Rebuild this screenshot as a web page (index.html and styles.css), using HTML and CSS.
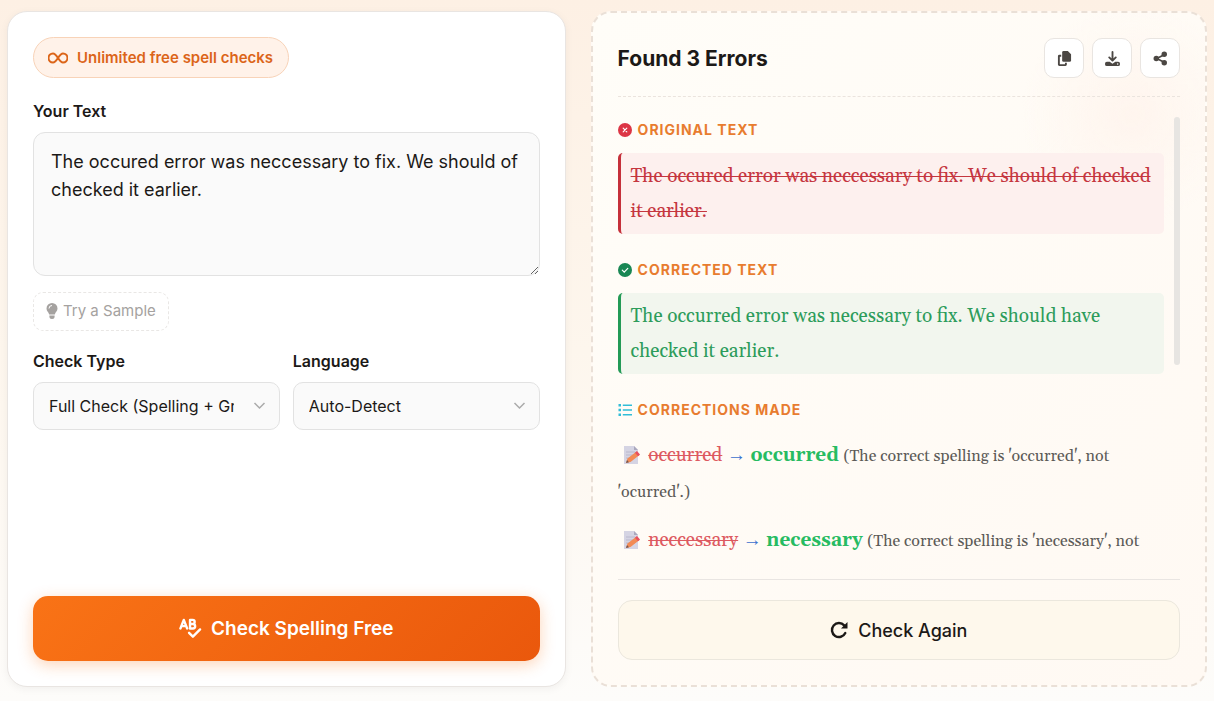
FILE: index.html
```html
<!DOCTYPE html>
<html lang="en">
<head>
  <meta charset="UTF-8">
  <meta name="viewport" content="width=device-width, initial-scale=1.0">
  <title>Free Spell Checker</title>
  <link rel="stylesheet" href="styles.css">
</head>
<body>
  <main class="checker">
    <!-- Input panel -->
    <form class="card input-card">
      <div class="badge">
        <svg class="icon-infinity" viewBox="0 0 20 12" aria-hidden="true"><path d="M10 6C8.300 3.400 7 1.500 5 1.500a4.500 4.500 0 0 0 0 9C7 10.500 8.300 8.600 10 6S13 1.500 15 1.500a4.500 4.500 0 0 1 0 9C13 10.500 11.700 8.600 10 6z"/></svg>
        <span>Unlimited free spell checks</span>
      </div>
      <label class="label" for="userText">Your Text</label>
      <textarea class="text-input" id="userText">The occured error was neccessary to fix. We should of checked it earlier.</textarea>
      <button type="button" class="sample-btn">
        <svg class="icon-bulb" viewBox="0 0 12 16" aria-hidden="true"><path d="M6 0a5.500 5.500 0 0 0-5.500 5.500c0 2.500 2 3.500 2.700 6h5.600c.7-2.500 2.700-3.500 2.700-6A5.500 5.500 0 0 0 6 0zM3.400 12.500h5.200v1A2.500 2.500 0 0 1 6.100 16h-.2a2.500 2.500 0 0 1-2.500-2.500z"/><path class="shine" d="M3 5.500a3 3 0 0 1 3-3"/></svg>
        <span>Try a Sample</span>
      </button>
      <div class="options">
        <div class="option">
          <label class="label" for="checkType">Check Type</label>
          <div class="select-wrap">
            <select id="checkType">
              <option>Full Check (Spelling + Grammar)</option>
              <option>Spelling Only</option>
            </select>
            <svg class="chevron" viewBox="0 0 12 8" aria-hidden="true"><path d="M1 1l5 5 5-5"/></svg>
          </div>
        </div>
        <div class="option">
          <label class="label" for="language">Language</label>
          <div class="select-wrap">
            <select id="language">
              <option>Auto-Detect</option>
              <option>English</option>
            </select>
            <svg class="chevron" viewBox="0 0 12 8" aria-hidden="true"><path d="M1 1l5 5 5-5"/></svg>
          </div>
        </div>
      </div>
      <button type="button" class="check-btn">
        <svg class="icon-spell" viewBox="0 0 24 21" aria-hidden="true"><path d="M1.500 10.500L5 1.500l3.500 9M2.700 8h4.600M11.500 1.500v9h3a2.300 2.300 0 0 0 0-4.700h-3 2.700a2.100 2.100 0 0 0 0-4.300z"/><path d="M10.500 15l4 4 7.500-7.500"/></svg>
        <span>Check Spelling Free</span>
      </button>
    </form>

    <!-- Results panel -->
    <section class="card result-card">
      <header class="result-header">
        <h2>Found 3 Errors</h2>
        <div class="actions">
          <button type="button" class="icon-btn" aria-label="Copy">
            <svg viewBox="0 0 16 16" aria-hidden="true"><path d="M7 0h4.500L15 3.500V10a1.500 1.500 0 0 1-1.500 1.500H7A1.500 1.500 0 0 1 5.500 10V1.500A1.500 1.500 0 0 1 7 0z"/><path d="M2.500 4H4.500v2H3v8h5.500v-1.500h2v2A1.500 1.500 0 0 1 9 16H2.500A1.500 1.500 0 0 1 1 14.500v-9A1.500 1.500 0 0 1 2.500 4z"/></svg>
          </button>
          <button type="button" class="icon-btn" aria-label="Download">
            <svg viewBox="0 0 16 16" aria-hidden="true"><path d="M8 1v9M4.500 6.800L8 10.200l3.500-3.400" fill="none" stroke="currentColor" stroke-width="2" stroke-linecap="round" stroke-linejoin="round"/><path fill-rule="evenodd" d="M2 11.500h3L8 13.500l3-2H14a2 2 0 0 1 2 2v.5a2 2 0 0 1-2 2H2a2 2 0 0 1-2-2v-.5a2 2 0 0 1 2-2zm11.500 1.500a.8.8 0 1 0 0 1.600.8.8 0 0 0 0-1.600z"/></svg>
          </button>
          <button type="button" class="icon-btn" aria-label="Share">
            <svg viewBox="0 0 16 16" aria-hidden="true"><path d="M12 4L4 8l8 4" fill="none" stroke="currentColor" stroke-width="1.800"/><circle cx="12" cy="3.500" r="2.900"/><circle cx="3.500" cy="8" r="2.900"/><circle cx="12" cy="12.500" r="2.900"/></svg>
          </button>
        </div>
      </header>

      <div class="result-scroll">
        <div class="result-body">
          <h3>
            <svg viewBox="0 0 14 14" aria-hidden="true"><circle cx="7" cy="7" r="7" fill="#dc3545"/><path d="M5.200 5.200l3.600 3.600M8.800 5.200L5.200 8.800" fill="none" stroke="#fff" stroke-width="1.200" stroke-linecap="round"/></svg>
            Original Text
          </h3>
          <p class="quote original">The occured error was neccessary to fix. We should of checked it earlier.</p>
          <h3>
            <svg viewBox="0 0 14 14" aria-hidden="true"><circle cx="7" cy="7" r="7" fill="#198754"/><path d="M4.300 7.200l1.900 1.900 3.600-3.700" fill="none" stroke="#fff" stroke-width="1.200" stroke-linecap="round"/></svg>
            Corrected Text
          </h3>
          <p class="quote corrected">The occurred error was necessary to fix. We should have checked it earlier.</p>
          <h3>
            <svg viewBox="0 0 14 14" aria-hidden="true"><path d="M.5 1h2.500v2.500H.5zM.5 5.800h2.500v2.500H.5zM.5 10.500h2.500V13H.5zM4.800 1.500H14V3H4.800zM4.800 6.300H14v1.500H4.800zM4.800 11H14v1.500H4.800z" fill="#31bdd8"/></svg>
            Corrections Made
          </h3>
          <p class="fix">
            <svg class="memo" viewBox="0 0 18 20" aria-hidden="true"><path d="M1 1h10l4 4v14H1z" fill="#d5d4e3"/><path d="M11 1l4 4h-4z" fill="#aaa8bd"/><path d="M3 7h9M3 10h8M3 13h5" stroke="#bab8cd" fill="none"/><path d="M3 18l1.500-4.500 9-7 3 3.500-9 7z" fill="#f28b55"/><path d="M12 7.700l2-1.700 3 3.500-2 1.700z" fill="#e84f5f"/><path d="M3 18l1-3 2 2.200z" fill="#735650"/></svg>
            <del>occurred</del> <span class="arrow">→</span> <strong>occurred</strong> <span class="note">(The correct spelling is 'occurred', not 'ocurred'.)</span>
          </p>
          <p class="fix">
            <svg class="memo" viewBox="0 0 18 20" aria-hidden="true"><path d="M1 1h10l4 4v14H1z" fill="#d5d4e3"/><path d="M11 1l4 4h-4z" fill="#aaa8bd"/><path d="M3 7h9M3 10h8M3 13h5" stroke="#bab8cd" fill="none"/><path d="M3 18l1.500-4.500 9-7 3 3.500-9 7z" fill="#f28b55"/><path d="M12 7.700l2-1.700 3 3.500-2 1.700z" fill="#e84f5f"/><path d="M3 18l1-3 2 2.200z" fill="#735650"/></svg>
            <del>neccessary</del> <span class="arrow">→</span> <strong>necessary</strong> <span class="note">(The correct spelling is 'necessary', not</span>
          </p>
        </div>
        <div class="scroll-thumb"></div>
      </div>

      <footer class="result-footer">
        <button type="button" class="again-btn">
          <svg viewBox="0 0 18 18" aria-hidden="true"><path d="M14.200 4.400A7 7 0 1 0 15.300 12" fill="none" stroke="currentColor" stroke-width="2.400" stroke-linecap="round"/><path d="M17.500 1v6.500H11z" fill="currentColor"/></svg>
          <span>Check Again</span>
        </button>
      </footer>
    </section>
  </main>
</body>
</html>
```
FILE: styles.css
```css
* {
  box-sizing: border-box;
}
body {
  margin: 0;
  font-family: Inter, "Liberation Sans", sans-serif;
  color: #1c1917;
  background: linear-gradient(to bottom, #fdf0e4, #fdf6ed 50%, #fdfcfa);
}
button,
select,
textarea {
  font-family: inherit;
  color: inherit;
}
button {
  cursor: pointer;
}
.checker {
  display: grid;
  grid-template-columns: 29fr 32fr;
  gap: 25px;
  height: 100vh;
  min-height: 640px;
  padding: 11px 7px 14px;
}
.card {
  display: flex;
  flex-direction: column;
  min-width: 0;
  min-height: 0;
  border-radius: 20px;
}
/* Input panel */
.input-card {
  align-items: stretch;
  padding: 25px;
  background: #fff;
  border: 1px solid #e9e5e2;
  box-shadow: 0 2px 8px rgba(0, 0, 0, 0.05);
}
.badge {
  display: flex;
  align-items: center;
  align-self: flex-start;
  gap: 9px;
  height: 41px;
  margin-bottom: 22px;
  padding: 0 15px 0 14px;
  border: 1px solid #f8d3b8;
  border-radius: 21px;
  background: #fff2e9;
  color: #dc6519;
  font-size: 15px;
  font-weight: 600;
}
.icon-infinity {
  width: 20px;
  height: 12px;
  fill: none;
  stroke: currentColor;
  stroke-width: 2;
}
.label {
  display: block;
  margin-bottom: 10px;
  font-size: 16px;
  font-weight: 600;
  line-height: 22px;
}
.text-input {
  width: 100%;
  height: 144px;
  padding: 15px 17px;
  border: 1px solid #e2e2e2;
  border-radius: 12px;
  background: #fafafa;
  font-size: 18px;
  line-height: 28px;
  resize: vertical;
}
.sample-btn {
  display: flex;
  align-items: center;
  align-self: flex-start;
  gap: 5px;
  height: 39px;
  margin: 16px 0 19px;
  padding: 0 12px 2px;
  border: 1px dashed #e9e7e5;
  border-radius: 10px;
  background: transparent;
  color: #a5a2a0;
  font-size: 15px;
}
.icon-bulb {
  width: 12px;
  height: 16px;
  fill: currentColor;
}
.icon-bulb .shine {
  fill: none;
  stroke: #fff;
}
.options {
  display: grid;
  grid-template-columns: 1fr 1fr;
  gap: 13px;
}
.option {
  min-width: 0;
}
.select-wrap {
  position: relative;
}
.select-wrap select {
  width: 100%;
  height: 48px;
  padding: 0 45px 0 15px;
  border: 1px solid #e2e2e2;
  border-radius: 10px;
  background: #fafafa;
  font-size: 16px;
  appearance: none;
}
.chevron {
  position: absolute;
  top: 20px;
  right: 14px;
  width: 13px;
  height: 8px;
  fill: none;
  stroke: #aaa;
  stroke-width: 1.5;
  pointer-events: none;
}
.check-btn {
  display: flex;
  align-items: center;
  justify-content: center;
  gap: 9px;
  height: 65px;
  margin-top: auto;
  border: 0;
  border-radius: 15px;
  background: linear-gradient(135deg, #f97316, #ea580c);
  box-shadow: 0 4px 15px rgba(249, 115, 22, 0.3);
  color: #fff;
  font-size: 19px;
  font-weight: 600;
}
.icon-spell {
  width: 23px;
  height: 21px;
  fill: none;
  stroke: currentColor;
  stroke-width: 2.5;
  stroke-linecap: round;
  stroke-linejoin: round;
}
/* Results panel */
.result-card {
  padding: 25px;
  border: 2px dashed #eae0d7;
  background: radial-gradient(circle at 88% 15%, #fff5ee, transparent 14%), linear-gradient(135deg, #fffdf8, #fff9f3);
}
.result-header {
  display: flex;
  align-items: center;
  justify-content: space-between;
  padding-bottom: 18px;
  border-bottom: 1px dashed #ebe4de;
}
.result-header h2 {
  margin: 0;
  font-size: 21px;
  font-weight: 700;
}
.actions {
  display: flex;
  gap: 8px;
}
.icon-btn {
  display: flex;
  align-items: center;
  justify-content: center;
  width: 40px;
  height: 40px;
  padding: 0;
  border: 1px solid #e9e5e1;
  border-radius: 10px;
  background: #fff;
  color: #4b4743;
}
.icon-btn svg {
  width: 15px;
  height: 15px;
  fill: currentColor;
}
.result-scroll {
  display: flex;
  flex: 1;
  gap: 10px;
  min-height: 0;
  margin: 20px 0;
}
.result-body {
  flex: 1;
  min-width: 0;
  overflow-y: auto;
  scrollbar-width: none;
  font-family: Georgia, Gelasio, "Liberation Serif", serif;
}
.scroll-thumb {
  width: 6px;
  height: 56%;
  border-radius: 3px;
  background: #e7e5e2;
}
.result-body h3 {
  display: flex;
  align-items: center;
  gap: 6px;
  margin: 0 0 11px;
  font-family: Inter, "Liberation Sans", sans-serif;
  font-size: 14px;
  font-weight: 700;
  line-height: 25px;
  letter-spacing: 1px;
  text-transform: uppercase;
  color: #e87c2f;
}
.result-body h3 svg {
  width: 14px;
  height: 14px;
}
.quote {
  margin: 0 0 23px;
  padding: 6px 10px 5px;
  border-left: 3px solid;
  border-radius: 5px;
  font-size: 19px;
  line-height: 35px;
}
.original {
  border-color: #c5303a;
  background: #fdf0ee;
  color: #c5363f;
  text-decoration: line-through;
  text-decoration-thickness: 1px;
}
.corrected {
  border-color: #239a56;
  background: #f2f6ee;
  color: #2d9c5b;
}
.fix {
  margin: 15px 0 13px;
  font-size: 19px;
  line-height: 36px;
}
.fix + .fix {
  margin: 0;
}
.memo {
  width: 18px;
  height: 20px;
  margin: 0 3px 0 5px;
  vertical-align: -4px;
}
.fix del {
  color: #dd5960;
  text-decoration-thickness: 1px;
}
.fix strong {
  color: #27bb62;
}
.arrow {
  color: #3b6fce;
  font-family: "Liberation Serif", serif;
  line-height: 1;
}
.note {
  color: #5c5a57;
  font-size: 16px;
  line-height: 1;
}
.result-footer {
  padding-top: 20px;
  border-top: 1px solid #e9e5e2;
}
.again-btn {
  display: flex;
  align-items: center;
  justify-content: center;
  gap: 10px;
  width: 100%;
  height: 60px;
  border: 1px solid #ebe7dd;
  border-radius: 14px;
  background: #fef8ec;
  font-size: 18px;
  font-weight: 500;
}
.again-btn svg {
  width: 18px;
  height: 18px;
}
```
